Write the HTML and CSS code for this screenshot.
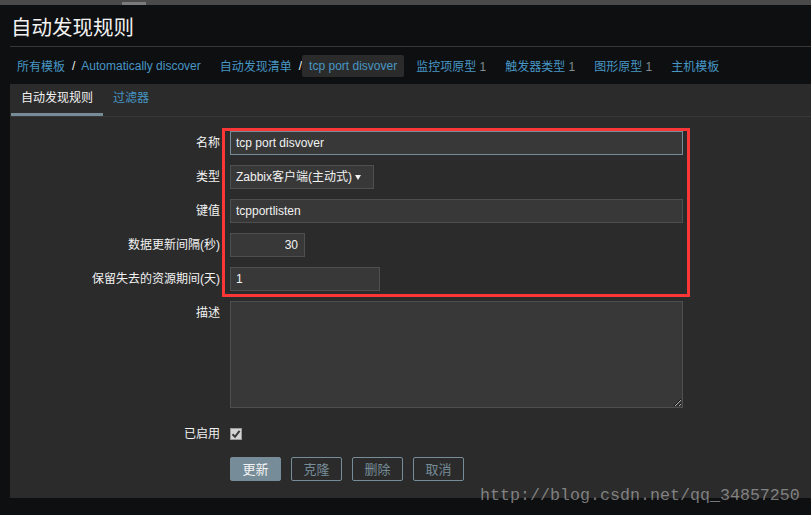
FILE: index.html
```html
<!DOCTYPE html>
<html lang="zh">
<head>
<meta charset="utf-8">
<title>自动发现规则</title>
<link rel="stylesheet" href="styles.css">
</head>
<body>
<div class="scrollbar"><div class="thumb"></div></div>
<header class="header"><h1>自动发现规则</h1></header>
<nav class="crumbs">
  <a class="link">所有模板</a><span class="sep">/</span><a class="link wide">Automatically discover</a>
  <a class="link">自动发现清单</a><span class="sep sep-tight">/</span><span class="current">tcp port disvover</span>
  <a class="link item">监控项原型 <span class="count">1</span></a>
  <a class="link item">触发器类型 <span class="count">1</span></a>
  <a class="link item">图形原型 <span class="count">1</span></a>
  <a class="link item">主机模板</a>
</nav>
<main class="panel">
  <div class="tabs">
    <span class="tab active">自动发现规则</span>
    <span class="tab">过滤器</span>
  </div>
  <form class="form">
    <label class="label">名称</label>
    <div class="field"><div class="input w-long focused">tcp port disvover</div></div>

    <label class="label">类型</label>
    <div class="field">
      <div class="input select">
        <span>Zabbix客户端(主动式)</span>
        <svg class="arrow" width="6" height="5" viewBox="0 0 6 5"><path d="M0 0H6L3 5Z" fill="#f2f2f2"/></svg>
      </div>
    </div>

    <label class="label">键值</label>
    <div class="field"><div class="input w-long">tcpportlisten</div></div>

    <label class="label">数据更新间隔(秒)</label>
    <div class="field"><div class="input w-num">30</div></div>

    <label class="label">保留失去的资源期间(天)</label>
    <div class="field"><div class="input w-mid">1</div></div>

    <label class="label label-top">描述</label>
    <div class="field"><textarea class="textarea"></textarea></div>

    <label class="label label-check">已启用</label>
    <div class="field field-check">
      <span class="checkbox"><svg width="10" height="10" viewBox="0 0 10 10"><path d="M1.5 5.2L4 7.8L8.6 1.8" fill="none" stroke="#3a3a3a" stroke-width="2"/></svg></span>
    </div>

    <div></div>
    <div class="buttons">
      <button type="button" class="btn primary">更新</button>
      <button type="button" class="btn">克隆</button>
      <button type="button" class="btn">删除</button>
      <button type="button" class="btn">取消</button>
    </div>
  </form>
  <div class="annot"></div>
</main>
<div class="watermark">http://blog.csdn.net/qq_34857250</div>
</body>
</html>
```

FILE: styles.css
```css
* { box-sizing: border-box; }
html, body { margin: 0; padding: 0; }
body {
  width: 811px;
  height: 515px;
  overflow: hidden;
  background: #0e0f11;
  color: #f2f2f2;
  font-family: "Liberation Sans", "Noto Sans CJK SC", sans-serif;
  font-size: 12px;
  position: relative;
}
.scrollbar {
  height: 5px;
  background: #4a4a4a;
  display: flex;
}
.thumb {
  margin-left: 122px;
  margin-top: 2px;
  width: 24px;
  height: 3px;
  background: #7b7b7b;
}
.header {
  margin-left: 10px;
  padding-left: 1px;
  padding-top: 2px;
  height: 42px;
  border-bottom: 1px solid #383838;
}
.header h1 {
  margin: 0;
  font-family: "Noto Sans CJK SC", sans-serif;
  font-weight: normal;
  font-size: 20.5px;
  line-height: 39px;
  color: #f2f2f2;
}
.crumbs {
  margin-left: 10px;
  padding-left: 7px;
  height: 37px;
  display: flex;
  align-items: center;
  white-space: nowrap;
}
.link { color: #4796c4; }
.wide { margin-right: 19px; }
.sep { color: #f2f2f2; margin: 0 6px 0 7px; }
.sep-tight { margin: 0 0 0 7px; }
.current {
  color: #4796c4;
  background: #2b2b2b;
  border-radius: 2px;
  height: 22px;
  line-height: 22px;
  padding: 0 7px;
  margin-right: 12px;
}
.item { margin-right: 19px; }
.count { color: #7f8b8f; }
.panel {
  margin-left: 10px;
  background: #2b2b2b;
  padding-bottom: 17px;
  position: relative;
}
.tabs {
  display: flex;
  height: 33px;
  border-bottom: 1px solid #383838;
  padding-left: 1px;
}
.tab {
  padding: 6px 10px 0;
  line-height: 17px;
  color: #4796c4;
  border-bottom: 3px solid transparent;
}
.tab.active {
  color: #f2f2f2;
  border-bottom-color: #768d99;
}
.form {
  display: grid;
  grid-template-columns: 210px 1fr;
  column-gap: 10px;
  row-gap: 10px;
  padding-top: 14px;
}
.label {
  text-align: right;
  line-height: 24px;
  color: #f2f2f2;
}
.label-top { align-self: start; }
.label-check { line-height: 12px; padding-top: 10px; padding-bottom: 7px; }
.field { display: flex; align-items: center; }
.field-check { align-items: flex-start; padding-top: 10px; }
.input {
  height: 24px;
  line-height: 22px;
  background: #383838;
  border: 1px solid #4f4f4f;
  padding: 0 5px;
  color: #f2f2f2;
  font-size: 12px;
  white-space: nowrap;
}
.focused { border-color: #768d99; }
.w-long { width: 453px; }
.w-num { width: 75px; text-align: right; padding-right: 6px; }
.w-mid { width: 150px; }
.select {
  width: 144px;
  display: flex;
  align-items: center;
  font-size: 12px;
}
.arrow { margin-left: auto; margin-right: 7px; }
.textarea {
  width: 453px;
  height: 107px;
  background: #383838;
  border: 1px solid #4f4f4f;
  margin: 0;
  resize: both;
  color: #f2f2f2;
  display: block;
}
.checkbox {
  width: 12px;
  height: 12px;
  background: #d4d4d4;
  border: 1px solid #9a9a9a;
  display: flex;
  align-items: center;
  justify-content: center;
}
.buttons { display: flex; gap: 10px; }
.btn {
  width: 51px;
  height: 24px;
  padding: 0;
  border: 1px solid #768d99;
  border-radius: 2px;
  background: transparent;
  color: #768d99;
  font-family: "Noto Sans CJK SC", sans-serif;
  font-size: 13px;
  line-height: 22px;
  text-align: center;
}
.btn.primary { background: #768d99; color: #f2f2f2; }
.annot {
  position: absolute;
  left: 212px;
  top: 44px;
  width: 468px;
  height: 169px;
  border: 3px solid #fb3636;
}
.watermark {
  position: absolute;
  left: 480px;
  top: 486px;
  font-family: "Liberation Mono", monospace;
  font-size: 16.67px;
  line-height: 20px;
  color: rgba(190, 190, 190, 0.6);
}
```
